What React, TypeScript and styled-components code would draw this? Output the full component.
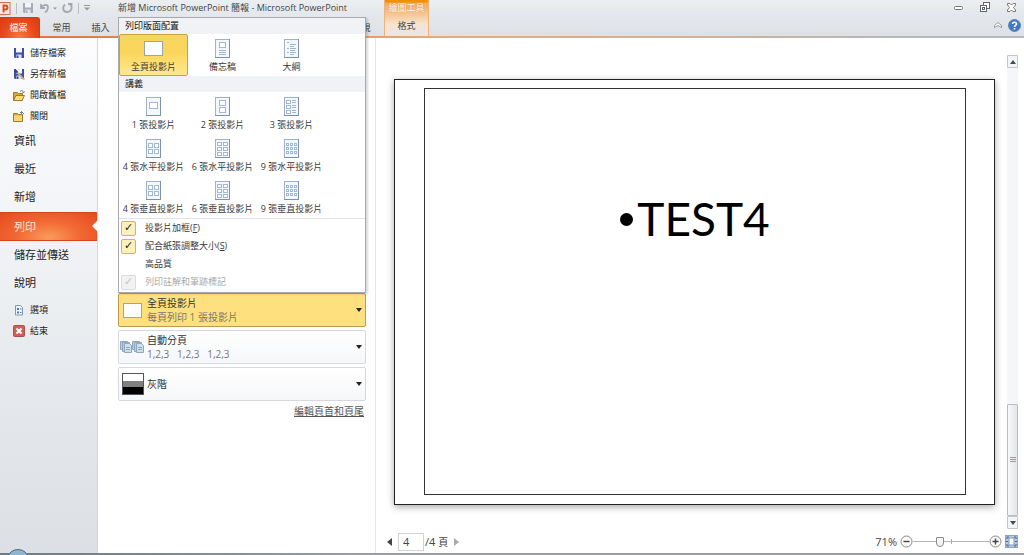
import React from "react";
import styled, { createGlobalStyle, css } from "styled-components";

const GlobalStyle = createGlobalStyle`
  *, *::before, *::after { box-sizing: border-box; }
  body {
    margin: 0;
    background: #fff;
    color: #333;
    font: 9px/14px "Open Sans", "Noto Sans CJK TC", sans-serif;
  }
  button, input { font: inherit; color: inherit; margin: 0; }
  button { padding: 0; border: 0; background: none; white-space: nowrap; }
  svg { display: block; flex: none; }
`;

const Window = styled.div`
  display: flex;
  flex-direction: column;
  min-height: 100vh;
`;

/* ---------- header ---------- */

const Header = styled.header`
  display: flex;
  height: 38px;
  flex: none;
  background: linear-gradient(#eceef0, #e3e6ea 50%, #dde0e5);
  border-bottom: 2px solid;
  border-image: linear-gradient(90deg, #e3713a, #ecaa72 45%, #b5b8bd 90%) 1;
`;

const HeaderMain = styled.div`
  width: 384px;
  flex: none;
`;

const TitleBar = styled.div`
  display: flex;
  align-items: center;
  height: 16px;
`;

const QuickAccess = styled.div`
  display: flex;
  align-items: center;
  width: 118px;
  gap: 5px;
`;

const Divider = styled.span`
  width: 1px;
  height: 11px;
  background: #b9bcc1;
`;

const Title = styled.h1`
  margin: 0;
  font-size: 9px;
  font-weight: 400;
  line-height: 14px;
  color: #444;
  white-space: nowrap;
`;

const Tabs = styled.nav`
  display: flex;
  height: 22px;
  padding: 1px 3px 0 0;
`;

const Tab = styled.button<{ $file?: boolean; $last?: boolean }>`
  width: 39px;
  flex: none;
  margin-left: ${(p) => (p.$last ? "auto" : 0)};
  color: #444;
  ${(p) =>
    p.$file &&
    css`
      width: 40px;
      height: 21px;
      margin-right: 2px;
      padding-right: 2px;
      color: #fff;
      border: 1px solid #c8411a;
      border-width: 1px 1px 0 0;
      border-radius: 0 3px 0 0;
      background: radial-gradient(ellipse at 50% 100%, #f77a3c, #e8481c 60%, #d93b12);
    `}
`;

const ContextGroup = styled.div`
  display: flex;
  flex-direction: column;
  width: 45px;
  height: 36px;
  flex: none;
  align-items: center;
  border: solid #f0b47a;
  border-width: 0 1px;
  background: linear-gradient(#f29100 2px, #f3a95c 3px, #f6c592 14px, #f7e3cf 24px, #e6e7ea);
`;

const ContextLabel = styled.span`
  height: 19px;
  line-height: 15px;
  color: #fff;
  text-shadow: 0 0 1px #c97a2c;
`;

const HeaderSide = styled.div`
  display: flex;
  flex-direction: column;
  flex: 1;
  align-items: flex-end;
  padding-right: 3px;
`;

const WindowButtons = styled.div`
  display: flex;
  align-items: center;
  height: 15px;
  gap: 17px;
  padding-right: 5px;
`;

const HelpButtons = styled.div`
  display: flex;
  align-items: center;
  height: 22px;
  gap: 6px;
`;

/* ---------- sidebar ---------- */

const Body = styled.div`
  display: flex;
  flex: 1;
`;

const Sidebar = styled.nav`
  display: flex;
  flex-direction: column;
  width: 98px;
  flex: none;
  padding-top: 4px;
  border-right: 1px solid #d3d6da;
  background: linear-gradient(#fcfcfd, #f2f4f7 35%, #e3e6ea 75%, #dcdfe4);
`;

const Command = styled.button`
  display: flex;
  align-items: center;
  gap: 5px;
  height: 21px;
  padding-left: 13px;
  color: #222;
`;

const Section = styled.button<{ $active?: boolean }>`
  position: relative;
  height: 28px;
  margin-top: ${(p) => (p.$active ? 1 : 0)}px;
  padding-left: 14px;
  font-size: 11px;
  line-height: 16px;
  text-align: left;
  color: #222;
  ${(p) =>
    p.$active &&
    css`
      height: 29px;
      color: #ffe9dc;
      border: solid #d5461c;
      border-width: 1px 0;
      background: radial-gradient(ellipse at 50% 90%, #fb9a5c, #f26a35 45%, #e64a1e);
      &::after {
        content: "";
        position: absolute;
        right: -1px;
        top: 7px;
        border: 6px solid transparent;
        border-left: 0;
        border-right-color: #fff;
      }
    `}
`;

const Sections = styled.div`
  display: flex;
  flex-direction: column;
  padding: 1px 0 2px;
`;

/* ---------- print settings ---------- */

const Settings = styled.section`
  display: flex;
  flex-direction: column;
  gap: 3px;
  width: 278px;
  flex: none;
  padding: 255px 9px 0 20px;
  border-right: 1px solid #e4e6e9;
`;

const Picker = styled.div`
  position: relative;
`;

const Option = styled.button<{ $active?: boolean }>`
  display: flex;
  align-items: center;
  gap: 2px;
  width: 100%;
  height: 34px;
  padding: 0 3px 0 1px;
  border: 1px solid ${(p) => (p.$active ? "#c09a4e" : "#d5d8dc")};
  border-radius: 2px;
  background: ${(p) => (p.$active ? "#ffe07f" : "linear-gradient(#fff, #f6f7f9)")};
  text-align: left;
  font-size: 10px;
  line-height: 14px;
`;

const OptionIcon = styled.span`
  display: flex;
  justify-content: center;
  width: 25px;
  flex: none;
`;

const OptionText = styled.span`
  flex: 1;
  color: #333;
  white-space: pre;
`;

const Detail = styled.span`
  display: block;
  color: #777;
`;

const FooterLink = styled.a`
  align-self: flex-end;
  margin-right: 2px;
  font-size: 10px;
  line-height: 14px;
  color: #555;
`;

const Menu = styled.div`
  position: absolute;
  left: 0;
  right: 0;
  bottom: 100%;
  z-index: 2;
  padding-bottom: 1px;
  border: 1px solid #a7abb0;
  background: #fff;
  box-shadow: 2px 1px 2px rgba(0, 0, 0, 0.15);
`;

const MenuHeading = styled.h2`
  margin: 0;
  height: 16px;
  padding-left: 6px;
  background: #f0f2f5;
  font-size: 9px;
  font-weight: 400;
  line-height: 16px;
  color: #111;
`;

const Tiles = styled.div`
  display: grid;
  grid-template-columns: repeat(3, 69px);
  grid-auto-rows: 42px;
`;

const Tile = styled.button<{ $active?: boolean }>`
  display: flex;
  flex-direction: column;
  align-items: center;
  justify-content: space-between;
  padding: ${(p) => (p.$active ? 6 : 4)}px 0 1px;
  border: 1px solid ${(p) => (p.$active ? "#c9a13c" : "transparent")};
  border-radius: 2px;
  color: #3a3a3a;
  background: ${(p) => (p.$active ? "linear-gradient(#f8d560, #fbd65c 45%, #ffe98e)" : "none")};
`;

const Checks = styled.div`
  border-top: 1px solid #e0e3e6;
`;

const CheckRow = styled.label<{ $off?: boolean }>`
  display: flex;
  align-items: center;
  height: 18px;
  gap: 9px;
  padding-left: 2px;
  color: ${(p) => (p.$off ? "#a9a9a9" : "#3a3a3a")};
`;

const Check = styled.input`
  appearance: none;
  display: grid;
  place-items: center;
  width: 15px;
  height: 15px;
  border: 1px solid transparent;
  border-radius: 2px;
  &:checked {
    border-color: #d2b25a;
    background: #fcf1bd;
  }
  &:checked::before {
    content: "✓";
    font: bold 11px/12px "DejaVu Sans", sans-serif;
    color: #222;
  }
  &:disabled {
    border-color: #dcdcdc;
    background: #f2f2f2;
  }
  &:disabled::before {
    color: #c4c4c4;
  }
`;

/* ---------- preview ---------- */

const Preview = styled.main`
  display: flex;
  flex-direction: column;
  flex: 1;
  min-width: 0;
`;

const Stage = styled.div`
  display: flex;
  flex: 1;
  gap: 12px;
  padding: 17px 6px 3px 18px;
`;

const Paper = styled.div`
  display: flex;
  flex: 1;
  margin: 24px 0 24px;
  padding: 8px 28px 9px 29px;
  border: 1px solid #222;
  background: #fff;
  box-shadow: 0 2px 7px rgba(0, 0, 0, 0.35);
`;

const Slide = styled.ul`
  flex: 1;
  margin: 0;
  padding: 98px 0 0;
  border: 1px solid #333;
  list-style: none;
`;

const Bullet = styled.li`
  display: flex;
  align-items: center;
  justify-content: center;
  gap: 4px;
  font: 46px/64px Lato, sans-serif;
  color: #000;
  &::before {
    content: "";
    width: 13px;
    height: 13px;
    border-radius: 50%;
    background: #000;
  }
`;

const ScrollBar = styled.div`
  display: flex;
  flex-direction: column;
  justify-content: flex-end;
  width: 11px;
  background: #f5f6f7;
`;

const ScrollArrow = styled.button`
  display: grid;
  place-items: center;
  height: 13px;
  border: 1px solid #c2c6cc;
  border-radius: 1px;
  background: #f3f4f6;
`;

const ScrollThumb = styled.div`
  display: grid;
  place-items: center;
  height: 112px;
  margin-top: auto;
  border: 1px solid #b9bdc3;
  border-radius: 1px;
  background: linear-gradient(90deg, #f8f8f9, #e3e5e8);
`;

const PreviewBar = styled.footer`
  display: flex;
  align-items: center;
  justify-content: space-between;
  height: 21px;
  padding: 0 6px 2px 11px;
  font-size: 11px;
  line-height: 16px;
  color: #444;
`;

const BarGroup = styled.div<{ $gap: number }>`
  display: flex;
  align-items: center;
  gap: ${(p) => p.$gap}px;
`;

const PageField = styled.label`
  display: flex;
  align-items: center;
  gap: 1px;
`;

const PageInput = styled.input`
  width: 26px;
  height: 18px;
  padding: 0 4px;
  border: 1px solid #cfd2d6;
  background: #fff;
`;

const Unit = styled.span`
  font-size: 10px;
`;

const Zoom = styled.input`
  appearance: none;
  width: 76px;
  height: 12px;
  background:
    linear-gradient(#aaa, #aaa) 50% 50% / 1px 5px no-repeat,
    linear-gradient(#b4b6b9, #b4b6b9) 50% 50% / 100% 1px no-repeat;
  &::-webkit-slider-thumb {
    appearance: none;
    width: 8px;
    height: 10px;
    border: 1px solid #888;
    border-radius: 1px 1px 4px 4px;
    background: #f4f4f4;
  }
`;

const Taskbar = styled.div`
  position: relative;
  height: 2px;
  flex: none;
  background: linear-gradient(90deg, #6d7c80, #7c8489 12%, #989da6 35%, #989da6);
`;

const StartOrb = styled.svg`
  position: absolute;
  left: 7px;
  bottom: 0;
`;

/* ---------- drawings ---------- */

const Arrow = ({ d, w, h, c = "#222" }: { d: "up" | "down" | "left" | "right"; w: number; h: number; c?: string }) => {
  const pts = {
    up: `0,${h} ${w},${h} ${w / 2},0`,
    down: `0,0 ${w},0 ${w / 2},${h}`,
    left: `${w},0 ${w},${h} 0,${h / 2}`,
    right: `0,0 0,${h} ${w},${h / 2}`,
  }[d];
  return (
    <svg width={w} height={h} aria-hidden="true">
      <polygon points={pts} fill={c} />
    </svg>
  );
};

const Disk = ({ c = "#3f4fa8", pen }: { c?: string; pen?: boolean }) => (
  <svg width="12" height="12" viewBox="0 0 12 12" aria-hidden="true">
    <path d="M1 1h10v10H2l-1-1z" fill={c} />
    <path d="M3 1h6v4.500H3z" fill="#f3f5fb" />
    <path d="M3.500 7.500h5V11h-5z" fill="#dfe3f2" />
    <path d="M4 8.500h1.500V11H4z" fill={c} />
    {pen && <path d="M4 4l6 6.500 1.500 1" stroke="#c9b49a" strokeWidth="1.800" />}
    {pen && <path d="M2.500 2.500l2 2" stroke="#4a4258" strokeWidth="2" />}
  </svg>
);

const Folder = ({ open }: { open?: boolean }) => (
  <svg width="12" height="12" viewBox="0 0 12 12" aria-hidden="true">
    <path d="M.500 3.500h4l1 1h4v7h-9z" fill="#dba73a" stroke="#a37a2a" />
    {open ? (
      <path d="M3 6.500h8.500l-2.500 5H.500z" fill="#fbdc7c" stroke="#a37a2a" />
    ) : (
      <path d="M1 5.500h8v5.500H1z" fill="#f8d676" />
    )}
    <path d={open ? "M7 2.500c1.500-1.500 3-1 3.500 1M9.500 3l1 1 1-1.500" : "M8.500 4V1.500M7 3l1.500-1.500L11 4"} fill="none" stroke="#6a7f96" />
  </svg>
);

const OptionsIcon = () => (
  <svg width="12" height="12" viewBox="0 0 12 12" aria-hidden="true">
    <path d="M2.500 1.500h5l2 2v7.500h-7z" fill="#eef4fb" stroke="#7f97b5" />
    <path d="M4 4h2v2H4zM4 7.500h2v2H4z" fill="#4c79b4" />
    <path d="M7 5h1.500M7 8.500h1.500" stroke="#4c79b4" />
  </svg>
);

const ExitIcon = () => (
  <svg width="12" height="12" viewBox="0 0 12 12" aria-hidden="true">
    <rect x=".5" y=".5" width="11" height="11" rx="1" fill="#cc6159" stroke="#a4534e" />
    <path d="M3.500 3.500l5 5M8.500 3.500l-5 5" stroke="#fff" strokeWidth="2" />
  </svg>
);

const BlankSlide = () => (
  <svg width="19" height="15" aria-hidden="true">
    <rect x=".5" y=".5" width="18" height="14" fill="#fdfdfe" stroke="#98a3b3" />
  </svg>
);

type PageKind = "notes" | "outline" | "1" | "2" | "3" | "4" | "6" | "9";

const boxes: Record<PageKind, number[][]> = {
  notes: [[4, 3, 6, 5]],
  outline: [],
  "1": [[3, 5, 8, 6]],
  "2": [[4, 3, 6, 5], [4, 10, 6, 5]],
  "3": [[2, 3, 4, 3], [2, 8, 4, 3], [2, 13, 4, 3]],
  "4": [[2, 4, 4, 4], [8, 4, 4, 4], [2, 10, 4, 4], [8, 10, 4, 4]],
  "6": [2, 7, 12].flatMap((y) => [[2, y + 1, 4, 3], [8, y + 1, 4, 3]]),
  "9": [4, 8, 12].flatMap((y) => [[2, y, 2, 2], [6, y, 2, 2], [10, y, 2, 2]]),
};

const lines: Partial<Record<PageKind, string>> = {
  notes: "M4 11.500h7M4 13.500h7M4 15.500h7",
  outline: "M3 3.500h2M6 5.500h6M6 7.500h4M3 9.500h2M6 9.500h6M6 11.500h5M3 13.500h2M6 13.500h6M6 15.500h4",
  "3": "M8 3.500h4M8 5.500h4M8 8.500h4M8 10.500h4M8 13.500h4M8 15.500h4",
};

const PageIcon = ({ kind }: { kind: PageKind }) => (
  <svg width="16" height="20" aria-hidden="true">
    <rect x=".5" y=".5" width="14" height="18" fill="#f3f8fc" stroke="#a3b1c4" />
    <path d="M14.500 0v18.500H0" fill="none" stroke="#7f90a8" />
    {boxes[kind].map(([x, y, w, h], i) => (
      <rect key={i} x={x + 0.5} y={y + 0.5} width={w} height={h} fill="#fff" stroke="#a3b9d3" />
    ))}
    {lines[kind] && <path d={lines[kind]} stroke="#a3b6d0" />}
  </svg>
);

const CollateIcon = () => (
  <svg width="25" height="14" aria-hidden="true">
    {[0, 12].map((x) => (
      <g key={x} transform={`translate(${x} 0)`} fill="#b9cfdf" stroke="#8fa8bd">
        <path d="M.500 1.500h7v8h-7z" />
        <path d="M2.500 2.500h7v9h-7z" />
        <path d="M4.500 3.500h5l2 2v7h-7z" fill="#cfe0eb" />
        <path d="M6 7.500h4M6 9.500h4" />
      </g>
    ))}
  </svg>
);

const GrayIcon = () => (
  <svg width="22" height="22" aria-hidden="true">
    <rect width="22" height="22" fill="#555" />
    <rect x="1" y="1" width="20" height="7" fill="#fff" />
    <rect x="1" y="8" width="20" height="6" fill="#808080" />
    <rect x="1" y="14" width="20" height="7" fill="#000" />
  </svg>
);

const RoundIcon = ({ plus }: { plus?: boolean }) => (
  <svg width="13" height="13" aria-hidden="true">
    <circle cx="6.500" cy="6.500" r="5.500" fill="#fafafa" stroke="#888" />
    <path d={plus ? "M3.500 6.500h6M6.500 3.500v6" : "M3.500 6.500h6"} stroke="#444" strokeWidth="1.400" />
  </svg>
);

const FitIcon = () => (
  <svg width="13" height="13" aria-hidden="true">
    <rect x=".5" y=".5" width="12" height="12" fill="#b4cbe2" stroke="#8ba3bf" />
    <rect x="4" y="3" width="5" height="7" fill="#fff" stroke="#7f9abb" />
    <path d="M2 4V2h2M9 2h2v2M11 9v2H9M4 11H2V9M1 6.500h2M10 6.500h2" fill="none" stroke="#3f6592" />
  </svg>
);

/* ---------- data ---------- */

const tabs = ["常用", "插入", "檢視"];

const layouts: [PageKind | "full", string][] = [
  ["full", "全頁投影片"],
  ["notes", "備忘稿"],
  ["outline", "大綱"],
];

const handouts: [PageKind, string][] = [
  ["1", "1 張投影片"],
  ["2", "2 張投影片"],
  ["3", "3 張投影片"],
  ["4", "4 張水平投影片"],
  ["6", "6 張水平投影片"],
  ["9", "9 張水平投影片"],
  ["4", "4 張垂直投影片"],
  ["6", "6 張垂直投影片"],
  ["9", "9 張垂直投影片"],
];

const LayoutMenu = () => (
  <Menu>
    <MenuHeading>列印版面配置</MenuHeading>
    <Tiles>
      {layouts.map(([kind, name]) => (
        <Tile key={name} $active={kind === "full"}>
          {kind === "full" ? <BlankSlide /> : <PageIcon kind={kind} />}
          {name}
        </Tile>
      ))}
    </Tiles>
    <MenuHeading>講義</MenuHeading>
    <Tiles>
      {handouts.map(([kind, name]) => (
        <Tile key={name}>
          <PageIcon kind={kind} />
          {name}
        </Tile>
      ))}
    </Tiles>
    <Checks>
      <CheckRow>
        <Check type="checkbox" defaultChecked />
        <span>投影片加框(<u>F</u>)</span>
      </CheckRow>
      <CheckRow>
        <Check type="checkbox" defaultChecked />
        <span>配合紙張調整大小(<u>S</u>)</span>
      </CheckRow>
      <CheckRow>
        <Check type="checkbox" />
        <span>高品質</span>
      </CheckRow>
      <CheckRow $off>
        <Check type="checkbox" defaultChecked disabled />
        <span>列印註解和筆跡標記</span>
      </CheckRow>
    </Checks>
  </Menu>
);

export default function App() {
  return (
    <Window>
      <GlobalStyle />
      <Header>
        <HeaderMain>
          <TitleBar>
            <QuickAccess>
              <svg width="11" height="13" aria-hidden="true">
                <rect x="-2" y=".5" width="12" height="12" fill="#fbe9df" stroke="#d0704c" />
                <path d="M3.500 10.500v-7h2a2 2 0 0 1 0 4h-2" fill="none" stroke="#cf4a1c" strokeWidth="1.800" />
              </svg>
              <Divider />
              <button aria-label="儲存"><Disk c="#a9abb3" /></button>
              <button aria-label="復原">
                <svg width="18" height="12" aria-hidden="true">
                  <path d="M2 2v4h4M2.500 5.500C5 2 9 2 9 5.500c0 2-1 3.500-3 5" fill="none" stroke="#a4a7ad" strokeWidth="1.800" />
                  <path d="M14 5.500h4l-2 2z" fill="#8d9096" />
                </svg>
              </button>
              <button aria-label="取消復原">
                <svg width="11" height="12" aria-hidden="true">
                  <path d="M3 2.500C0 5 1 10 5 10s6-4 3.500-7M6 2h3.500v3.500" fill="none" stroke="#a4a7ad" strokeWidth="1.800" />
                </svg>
              </button>
              <Divider />
              <button aria-label="自訂">
                <svg width="6" height="6" aria-hidden="true">
                  <path d="M0 .500h6" stroke="#999" />
                  <path d="M0 2.500h6l-3 3z" fill="#999" />
                </svg>
              </button>
            </QuickAccess>
            <Title>新增 Microsoft PowerPoint 簡報 - Microsoft PowerPoint</Title>
          </TitleBar>
          <Tabs>
            <Tab $file>檔案</Tab>
            {tabs.map((t, i) => (
              <Tab key={t} $last={i === tabs.length - 1}>{t}</Tab>
            ))}
          </Tabs>
        </HeaderMain>
        <ContextGroup>
          <ContextLabel>繪圖工具</ContextLabel>
          <Tab>格式</Tab>
        </ContextGroup>
        <HeaderSide>
          <WindowButtons>
            <button aria-label="最小化">
              <svg width="9" height="5" aria-hidden="true">
                <rect x=".5" y="1.500" width="8" height="3" rx="1" fill="#fff" stroke="#777" />
              </svg>
            </button>
            <button aria-label="還原">
              <svg width="10" height="10" aria-hidden="true">
                <rect x="3.500" y=".5" width="6" height="6" fill="#fff" stroke="#666" />
                <rect x=".5" y="3.500" width="6" height="6" fill="#fff" stroke="#666" />
                <rect x="2.500" y="5.500" width="2" height="2" fill="none" stroke="#666" />
              </svg>
            </button>
            <button aria-label="關閉">
              <svg width="9" height="9" viewBox="0 0 9 9" aria-hidden="true">
                <path d="M.500.500h2.500l1.500 1.500L6 .500h2.500V2L6.500 4.500l2 2.500v1.500H6L4.500 7 3 8.500H.500V7l2-2.500L.500 2z" fill="#fff" stroke="#777" />
              </svg>
            </button>
          </WindowButtons>
          <HelpButtons>
            <button aria-label="最小化功能區">
              <svg width="8" height="6" aria-hidden="true">
                <path d="M.500 3.500L4 .500l3.500 3v2L4 3.500l-3.500 2z" fill="#fff" stroke="#999" />
              </svg>
            </button>
            <button aria-label="說明">
              <svg width="13" height="13" aria-hidden="true">
                <circle cx="6.500" cy="6.500" r="6" fill="#4379c4" stroke="#5c86bd" />
                <path d="M4.500 5c0-2.500 4-2.500 4 0 0 1.300-2 1.300-2 3M6.500 9v1.500" fill="none" stroke="#fff" strokeWidth="1.500" />
              </svg>
            </button>
          </HelpButtons>
        </HeaderSide>
      </Header>

      <Body>
        <Sidebar>
          <Command><Disk />儲存檔案</Command>
          <Command><Disk pen />另存新檔</Command>
          <Command><Folder open />開啟舊檔</Command>
          <Command><Folder />關閉</Command>
          <Sections>
            <Section>資訊</Section>
            <Section>最近</Section>
            <Section>新增</Section>
            <Section $active>列印</Section>
            <Section>儲存並傳送</Section>
            <Section>說明</Section>
          </Sections>
          <Command><OptionsIcon />選項</Command>
          <Command><ExitIcon />結束</Command>
        </Sidebar>

        <Settings>
          <Picker>
            <Option $active>
              <OptionIcon><BlankSlide /></OptionIcon>
              <OptionText>
                全頁投影片
                <Detail>每頁列印 1 張投影片</Detail>
              </OptionText>
              <Arrow d="down" w={6} h={4} />
            </Option>
            <LayoutMenu />
          </Picker>
          <Option>
            <OptionIcon><CollateIcon /></OptionIcon>
            <OptionText>
              自動分頁
              <Detail>{"1,2,3   1,2,3   1,2,3"}</Detail>
            </OptionText>
            <Arrow d="down" w={6} h={4} />
          </Option>
          <Option>
            <OptionIcon><GrayIcon /></OptionIcon>
            <OptionText>灰階</OptionText>
            <Arrow d="down" w={6} h={4} />
          </Option>
          <FooterLink href="#header-footer">編輯頁首和頁尾</FooterLink>
        </Settings>

        <Preview>
          <Stage>
            <Paper>
              <Slide>
                <Bullet>TEST4</Bullet>
              </Slide>
            </Paper>
            <ScrollBar>
              <ScrollArrow aria-label="向上捲動"><Arrow d="up" w={6} h={4} c="#444b55" /></ScrollArrow>
              <ScrollThumb>
                <svg width="6" height="6" aria-hidden="true">
                  <path d="M0 .500h6M0 2.500h6M0 4.500h6" stroke="#999" />
                </svg>
              </ScrollThumb>
              <ScrollArrow aria-label="向下捲動"><Arrow d="down" w={6} h={4} c="#444b55" /></ScrollArrow>
            </ScrollBar>
          </Stage>
          <PreviewBar>
            <BarGroup $gap={6}>
              <button aria-label="上一頁"><Arrow d="left" w={5} h={8} c="#444" /></button>
              <PageField>
                <PageInput defaultValue="4" aria-label="頁碼" />
                <span>/4 <Unit>頁</Unit></span>
              </PageField>
              <button aria-label="下一頁"><Arrow d="right" w={5} h={8} c="#aaa" /></button>
            </BarGroup>
            <BarGroup $gap={3}>
              <span>71%</span>
              <BarGroup $gap={0}>
                <button aria-label="縮小"><RoundIcon /></button>
                <Zoom type="range" defaultValue={34} aria-label="縮放" />
                <button aria-label="放大"><RoundIcon plus /></button>
              </BarGroup>
              <button aria-label="縮放至頁面"><FitIcon /></button>
            </BarGroup>
          </PreviewBar>
        </Preview>
      </Body>

      <Taskbar>
        <StartOrb width="22" height="6" aria-hidden="true">
          <ellipse cx="11" cy="9" rx="10" ry="8.500" fill="#8fb4d0" stroke="#4d6a80" />
        </StartOrb>
      </Taskbar>
    </Window>
  );
}
